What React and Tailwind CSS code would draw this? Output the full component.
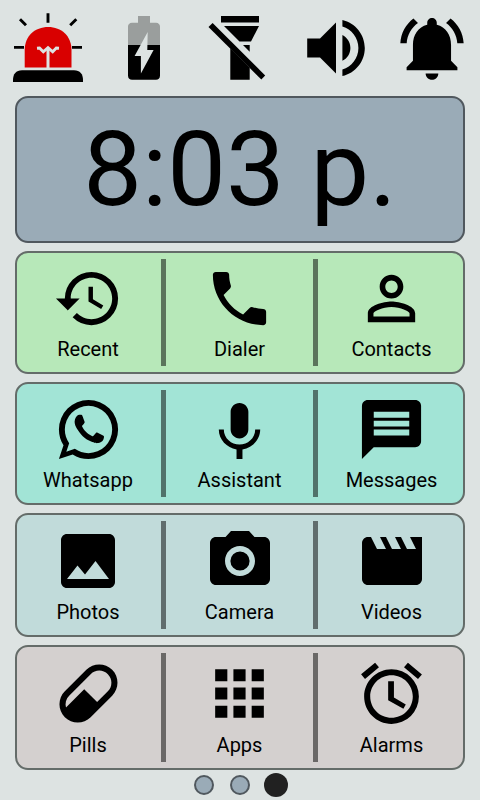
const ICONS = {
  recent:
    'M13 3a9 9 0 0 0-9 9H1l3.89 3.89.07.14L9 12H6c0-3.87 3.13-7 7-7s7 3.13 7 7-3.13 7-7 7c-1.93 0-3.68-.79-4.94-2.06l-1.42 1.42A8.95 8.95 0 0 0 13 21a9 9 0 0 0 0-18zm-1 5v5l4.28 2.54.72-1.21-3.5-2.08V8H12z',
  dialer:
    'M6.62 10.79c1.44 2.83 3.76 5.14 6.59 6.59l2.2-2.2c.27-.27.67-.36 1.02-.24 1.12.37 2.33.57 3.57.57.55 0 1 .45 1 1V20c0 .55-.45 1-1 1-9.39 0-17-7.61-17-17 0-.55.45-1 1-1h3.5c.55 0 1 .45 1 1 0 1.25.2 2.45.57 3.57.11.35.03.74-.25 1.02l-2.2 2.2z',
  contacts:
    'M12 5.9c1.16 0 2.1.94 2.1 2.1s-.94 2.1-2.1 2.1S9.9 9.16 9.9 8s.94-2.1 2.1-2.1m0 9c2.97 0 6.1 1.46 6.1 2.1v1.1H5.9V17c0-.64 3.13-2.1 6.1-2.1M12 4C9.79 4 8 5.79 8 8s1.79 4 4 4 4-1.79 4-4-1.79-4-4-4zm0 9c-2.67 0-8 1.34-8 4v3h16v-3c0-2.66-5.33-4-8-4z',
  whatsapp:
    'M16.75,13.96C17,14.09 17.16,14.16 17.21,14.26C17.27,14.37 17.25,14.87 17,15.44C16.8,16 15.76,16.54 15.3,16.56C14.84,16.58 14.83,16.92 12.34,15.83C9.85,14.74 8.35,12.08 8.23,11.91C8.11,11.74 7.27,10.53 7.31,9.3C7.36,8.08 8,7.5 8.26,7.26C8.5,7 8.77,6.97 8.94,7H9.41C9.56,7 9.77,6.94 9.96,7.45L10.65,9.32C10.71,9.45 10.75,9.6 10.66,9.76L10.39,10.17L10,10.59C9.88,10.71 9.74,10.84 9.88,11.09C10,11.35 10.5,12.18 11.2,12.87C12.11,13.75 12.91,14.04 13.15,14.17C13.39,14.31 13.54,14.29 13.69,14.13L14.5,13.19C14.69,12.94 14.85,13 15.08,13.08L16.75,13.96M12,2A10,10 0 0,1 22,12A10,10 0 0,1 12,22C10.03,22 8.2,21.43 6.65,20.45L2,22L3.55,17.35C2.57,15.8 2,13.97 2,12A10,10 0 0,1 12,2M12,4A8,8 0 0,0 4,12C4,13.72 4.54,15.31 5.46,16.61L4.5,19.5L7.39,18.54C8.69,19.46 10.28,20 12,20A8,8 0 0,0 20,12A8,8 0 0,0 12,4Z',
  assistant:
    'M12 15c1.66 0 2.99-1.34 2.99-3L15 6c0-1.66-1.34-3-3-3S9 4.34 9 6v6c0 1.66 1.34 3 3 3zm5.3-3c0 3-2.54 5.1-5.3 5.1S6.7 15 6.7 12H5c0 3.41 2.72 6.23 6 6.72V22h2v-3.28c3.28-.48 6-3.3 6-6.72h-1.7z',
  messages:
    'M20 2H4c-1.1 0-1.99.9-1.99 2L2 22l4-4h14c1.1 0 2-.9 2-2V4c0-1.1-.9-2-2-2zm-2 12H6v-2h12v2zm0-3H6V9h12v2zm0-3H6V6h12v2z',
  photos:
    'M21 19V5c0-1.1-.9-2-2-2H5c-1.1 0-2 .9-2 2v14c0 1.1.9 2 2 2h14c1.1 0 2-.9 2-2zM8.5 13.5l2.5 3.01L14.5 12l4.5 6H5l3.5-4.5z',
  camera:
    'M12 8.8a3.2 3.2 0 1 0 0 6.4 3.2 3.2 0 0 0 0-6.4zM9 2L7.17 4H4c-1.1 0-2 .9-2 2v12c0 1.1.9 2 2 2h16c1.1 0 2-.9 2-2V6c0-1.1-.9-2-2-2h-3.17L15 2H9zm3 15c-2.76 0-5-2.24-5-5s2.24-5 5-5 5 2.24 5 5-2.24 5-5 5z',
  videos:
    'M18 4l2 4h-3l-2-4h-2l2 4h-3l-2-4H8l2 4H7L5 4H4c-1.1 0-1.99.9-1.99 2L2 18c0 1.1.9 2 2 2h16c1.1 0 2-.9 2-2V4h-4z',
  pills:
    'M4.22,11.29L11.29,4.22C13.64,1.88 17.43,1.88 19.78,4.22C22.12,6.56 22.12,10.36 19.78,12.71L12.71,19.78C10.36,22.12 6.56,22.12 4.22,19.78C1.88,17.43 1.88,13.64 4.22,11.29M5.64,12.71C4.59,13.75 4.24,15.24 4.6,16.57L10.59,10.59L14.83,14.83L18.36,11.29C19.93,9.73 19.93,7.2 18.36,5.64C16.8,4.07 14.27,4.07 12.71,5.64L5.64,12.71Z',
  apps:
    'M4 8h4V4H4v4zm6 12h4v-4h-4v4zm-6 0h4v-4H4v4zm0-6h4v-4H4v4zm6 0h4v-4h-4v4zm6-10v4h4V4h-4zm-6 4h4V4h-4v4zm6 6h4v-4h-4v4zm0 6h4v-4h-4v4z',
  alarms:
    'M22 5.72l-4.6-3.86-1.29 1.53 4.6 3.86L22 5.72zM7.88 3.39L6.6 1.86 2 5.71l1.29 1.53 4.59-3.85zM12.8 8h-1.9v6.2l5 2.8.8-1.4-3.9-2.3zM12 4c-4.97 0-9 4.03-9 9s4.02 9 9 9a9 9 0 0 0 0-18zm0 16c-3.87 0-7-3.13-7-7s3.13-7 7-7 7 3.13 7 7-3.13 7-7 7z',
};

const ROWS = [
  { style: 'h-[123px] bg-[#b7e8b9]', icon: 'size-[71px]', items: [['recent', 'Recent'], ['dialer', 'Dialer'], ['contacts', 'Contacts']] },
  { style: 'h-[123px] bg-[#a2e4d6]', icon: 'size-[71px]', items: [['whatsapp', 'Whatsapp'], ['assistant', 'Assistant'], ['messages', 'Messages']] },
  { style: 'h-[124px] bg-[#c1dbda]', icon: 'size-[72px]', items: [['photos', 'Photos'], ['camera', 'Camera'], ['videos', 'Videos']] },
  { style: 'h-[125px] bg-[#d4d0cf]', icon: 'size-[73px]', items: [['pills', 'Pills'], ['apps', 'Apps'], ['alarms', 'Alarms']] },
];

function StatusIcon({ label, viewBox, children }) {
  return (
    <button aria-label={label} className="h-24 w-24">
      <svg viewBox={viewBox} className="size-24">
        {children}
      </svg>
    </button>
  );
}

function StatusBar() {
  return (
    <header className="flex h-24 shrink-0">
      <StatusIcon label="Emergency" viewBox="0 0 96 96">
        <path d="M48 13.3V22.7M20 19.2L26 25.2M76.3 19.2L70.2 25.2M14 47.4H24M72 47.4H82" stroke="#000" strokeWidth="2.9" fill="none" />
        <path d="M24.7 67.5V50C24.7 36 35 27 48.2 27S71.5 36 71.5 50V67.5Z" fill="#d90000" />
        <path d="M48 48V68" stroke="#dde3e2" strokeWidth="3" fill="none" />
        <path d="M37 48.2L39.5 48L43.3 51.8L48 47.6L52.7 51.8L56.3 48L59 48.2" stroke="#dde3e2" strokeWidth="2.9" fill="none" />
        <path d="M13 82V80C13 74 16 70.2 22 70.2H74C80 70.2 83 74 83 80V82Z" />
      </StatusIcon>
      <StatusIcon label="Battery" viewBox="96 0 96 96">
        <path d="M138 16H150V22.7H156C158.5 22.7 160 24.5 160 26.5V45H128V26.5C128 24.5 129.5 22.7 132 22.7H138Z" fill="#9a9e9d" />
        <path d="M128 45H160V75.8C160 78.2 158.2 79.8 156 79.8H132C129.8 79.8 128 78.2 128 75.8Z" />
        <path d="M147.7 32L134.6 56H140.9V73.5L153.6 50H147.3Z" fill="#dde3e2" />
      </StatusIcon>
      <StatusIcon label="Flashlight" viewBox="192 0 96 96">
        <path d="M221 16H259V22.6H221ZM224 26H259L251 41.5H239.5ZM243 45H249.7V51.7ZM230.3 48.3L249.7 67.7V79.8H230.3Z" />
        <path d="M208.5 27L212.6 23L265.2 75.5L261.3 79.5Z" />
      </StatusIcon>
      <StatusIcon label="Volume" viewBox="288 0 96 96">
        <g transform="translate(297.6 9.6) scale(3.2)">
          <path d="M3 9v6h4l5 5V4L7 9H3zm13.5 3c0-1.77-1.02-3.29-2.5-4.03v8.05c1.48-.73 2.5-2.25 2.5-4.02zM14 3.23v2.06c2.89.86 5 3.54 5 6.71s-2.11 5.85-5 6.71v2.06c4.01-.91 7-4.49 7-8.77s-2.99-7.86-7-8.77z" />
        </g>
      </StatusIcon>
      <StatusIcon label="Ringer" viewBox="384 0 96 96">
        <g transform="translate(393.9 10) scale(3.175)">
          <path d="M7.58 4.08L6.15 2.65C3.75 4.48 2.17 7.3 2.03 10.5h2c.15-2.65 1.51-4.97 3.55-6.42zm12.39 6.42h2c-.15-3.2-1.73-6.02-4.12-7.85l-1.42 1.43c2.02 1.45 3.39 3.77 3.54 6.42zM18 11c0-3.07-1.64-5.64-4.5-6.32V4c0-.83-.67-1.5-1.5-1.5s-1.5.67-1.5 1.5v.68C7.63 5.36 6 7.92 6 11v5l-2 2v1h16v-1l-2-2v-5zm-6 11c.14 0 .27-.01.4-.04.65-.14 1.18-.58 1.44-1.18.1-.24.15-.5.15-.78h-4c.01 1.1.9 2 2.01 2z" />
        </g>
      </StatusIcon>
    </header>
  );
}

function Tile({ icon, label, size, width }) {
  return (
    <button className={`flex shrink-0 flex-col items-center pt-1 ${width}`}>
      <svg viewBox="0 0 24 24" className={`${size} shrink-0`}>
        <path d={ICONS[icon]} />
      </svg>
      <span className="mt-[3px] text-[20px] leading-6">{label}</span>
    </button>
  );
}

const Divider = () => <div className="w-[5px] shrink-0 bg-black/50" />;

export default function App() {
  return (
    <div className="flex h-[800px] w-[480px] flex-col overflow-hidden bg-[#dde3e2] font-['Roboto',sans-serif] text-black">
      <StatusBar />
      <main className="flex flex-col gap-2 px-[15px]">
        <section className="flex h-[147px] items-center justify-center rounded-[13px] border-2 border-[#50585e] bg-[#9aabb7] pt-0.5">
          <time className="text-[104.5px] leading-none">8:03 p.</time>
        </section>
        {ROWS.map(({ style, icon, items: [a, b, c] }) => (
          <section key={a[0]} className={`flex justify-center rounded-[13px] border-2 border-[#646c69] py-1.5 ${style}`}>
            <Tile icon={a[0]} label={a[1]} size={icon} width="w-[146px]" />
            <Divider />
            <Tile icon={b[0]} label={b[1]} size={icon} width="w-[147px]" />
            <Divider />
            <Tile icon={c[0]} label={c[1]} size={icon} width="w-[147px]" />
          </section>
        ))}
      </main>
      <nav className="flex h-[30px] items-center pl-[194px]">
        <span className="size-5 rounded-full border-2 border-[#50585e] bg-[#9aabb7]" />
        <span className="ml-4 size-5 rounded-full border-2 border-[#50585e] bg-[#9aabb7]" />
        <span className="ml-3.5 size-6 rounded-full bg-[#212121]" />
      </nav>
    </div>
  );
}
